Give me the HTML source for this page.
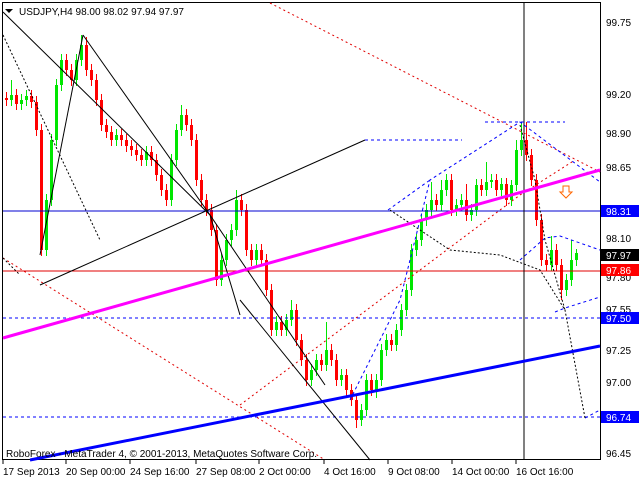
<!DOCTYPE html><html><head><meta charset="utf-8"><style>
body{margin:0;background:#fff;width:640px;height:480px;overflow:hidden;font-family:"Liberation Sans",sans-serif}
svg{display:block}
text{font-family:"Liberation Sans",sans-serif;font-size:10px}
</style></head><body>
<svg width="640" height="480" xmlns="http://www.w3.org/2000/svg">
<rect x="0" y="0" width="640" height="480" fill="#fff"/>
<rect x="2.5" y="2.5" width="598" height="457" fill="none" stroke="#000"/>
<path fill="#ff0000" d="M5 98h3V100h-3zM15 95h3V104h-3zM30 96h3V102h-3zM35 102h3V130h-3zM40 130h3V250h-3zM65 60h3V70h-3zM70 70h3V80h-3zM85 45h3V70h-3zM90 70h3V80h-3zM95 80h3V100h-3zM100 100h3V125h-3zM105 125h3V132h-3zM110 132h3V140h-3zM120 135h3V140h-3zM125 140h3V146h-3zM130 146h3V150h-3zM135 150h3V155h-3zM140 155h3V160h-3zM150 152h3V160h-3zM155 160h3V175h-3zM160 175h3V190h-3zM165 190h3V200h-3zM185 115h3V125h-3zM190 125h3V140h-3zM195 140h3V180h-3zM200 180h3V200h-3zM205 200h3V210h-3zM210 210h3V230h-3zM215 230h3V280h-3zM240 200h3V210h-3zM245 210h3V250h-3zM250 250h3V260h-3zM260 250h3V260h-3zM265 260h3V290h-3zM270 290h3V330h-3zM280 322h3V330h-3zM295 310h3V340h-3zM300 340h3V360h-3zM305 360h3V380h-3zM320 360h3V365h-3zM330 350h3V360h-3zM335 360h3V380h-3zM345 375h3V390h-3zM350 390h3V400h-3zM355 400h3V420h-3zM370 380h3V390h-3zM390 340h3V345h-3zM435 200h3V205h-3zM450 180h3V210h-3zM465 200h3V215h-3zM480 185h3V190h-3zM495 180h3V190h-3zM505 184h3V200h-3zM525 140h3V155h-3zM530 155h3V180h-3zM535 180h3V220h-3zM540 220h3V260h-3zM545 260h3V265h-3zM555 250h3V265h-3zM560 265h3V290h-3z"/>
<path stroke="#ff0000" fill="none" d="M6.5 92V106M16.5 89V110M31.5 90V108M36.5 96V136M41.5 124V256M66.5 54V76M71.5 64V86M86.5 37V76M91.5 64V86M96.5 74V106M101.5 94V131M106.5 119V138M111.5 126V146M121.5 129V146M126.5 134V152M131.5 140V156M136.5 144V161M141.5 149V166M151.5 146V166M156.5 154V181M161.5 169V196M166.5 184V206M186.5 109V131M191.5 119V146M196.5 134V186M201.5 174V206M206.5 194V216M211.5 204V236M216.5 224V286M241.5 194V216M246.5 204V256M251.5 244V266M261.5 244V266M266.5 254V296M271.5 284V336M281.5 316V336M296.5 304V346M301.5 334V366M306.5 354V386M321.5 354V371M331.5 344V366M336.5 354V386M346.5 369V396M351.5 384V406M356.5 394V428M371.5 374V396M391.5 334V351M436.5 194V211M451.5 174V216M466.5 184V221M481.5 179V196M496.5 174V196M506.5 178V206M526.5 122V161M531.5 149V186M536.5 174V226M541.5 214V266M546.5 254V271M556.5 244V271M561.5 259V300"/>
<path fill="#00e600" d="M10 95h3V100h-3zM20 100h3V104h-3zM25 96h3V100h-3zM45 200h3V250h-3zM50 140h3V200h-3zM55 85h3V140h-3zM60 60h3V85h-3zM75 60h3V80h-3zM80 45h3V60h-3zM115 135h3V140h-3zM145 152h3V160h-3zM170 160h3V200h-3zM175 130h3V160h-3zM180 115h3V130h-3zM220 260h3V280h-3zM225 240h3V260h-3zM230 230h3V240h-3zM235 200h3V230h-3zM255 250h3V260h-3zM275 322h3V330h-3zM285 320h3V330h-3zM290 310h3V320h-3zM310 370h3V380h-3zM315 360h3V370h-3zM325 350h3V365h-3zM340 375h3V380h-3zM360 410h3V420h-3zM365 380h3V410h-3zM375 380h3V390h-3zM380 350h3V380h-3zM385 340h3V350h-3zM395 330h3V345h-3zM400 310h3V330h-3zM405 290h3V310h-3zM410 250h3V290h-3zM415 240h3V250h-3zM420 220h3V240h-3zM425 210h3V220h-3zM430 200h3V210h-3zM440 190h3V205h-3zM445 180h3V190h-3zM455 205h3V210h-3zM460 200h3V205h-3zM470 210h3V215h-3zM475 185h3V210h-3zM485 182h3V190h-3zM490 180h3V182h-3zM500 184h3V190h-3zM510 185h3V200h-3zM515 150h3V185h-3zM520 140h3V150h-3zM550 250h3V265h-3zM565 280h3V290h-3zM570 260h3V280h-3zM575 253h3V260h-3z"/>
<path stroke="#00e600" fill="none" d="M11.5 80V106M21.5 94V110M26.5 90V106M46.5 194V256M51.5 134V206M56.5 79V146M61.5 54V91M76.5 54V86M81.5 35V66M116.5 129V146M146.5 146V166M171.5 154V206M176.5 124V166M181.5 105V136M221.5 254V286M226.5 234V266M231.5 224V246M236.5 190V236M256.5 244V266M276.5 316V336M286.5 314V336M291.5 300V326M311.5 364V386M316.5 354V376M326.5 322V371M341.5 369V386M361.5 404V426M366.5 374V416M376.5 374V398M381.5 344V386M386.5 334V356M396.5 324V351M401.5 304V336M406.5 284V316M411.5 244V296M416.5 234V256M421.5 214V246M426.5 204V226M431.5 182V216M441.5 180V211M446.5 174V196M456.5 199V216M461.5 194V211M471.5 204V221M476.5 179V216M486.5 162V196M491.5 174V188M501.5 178V196M511.5 180V206M516.5 140V191M521.5 122V156M551.5 236V271M566.5 274V296M571.5 240V286M576.5 249V266"/>
<line x1="3" y1="211" x2="600" y2="211" stroke="#0000d0"/>
<line x1="3" y1="271" x2="600" y2="271" stroke="#e00000"/>
<line x1="3" y1="318" x2="600" y2="318" stroke="#0000ff" stroke-dasharray="3,3"/>
<line x1="3" y1="417" x2="600" y2="417" stroke="#0000ff" stroke-dasharray="3,3"/>
<line x1="524" y1="3" x2="524" y2="460" stroke="#000"/>
<g fill="none" stroke="#e00000" stroke-dasharray="2,3">
<polyline points="270,3 600,172"/><polyline points="3,258 325,460"/><polyline points="240,405 520,195 575,160"/>
</g>
<g fill="none" stroke="#0000ff" stroke-dasharray="3,3">
<polyline points="365,140 462,140"/><polyline points="485,122 565,122"/>
<polyline points="350,400 400,300 430,180 520,122 600,182"/>
<polyline points="388,210 430,180"/>
<polyline points="520,260 545,238 560,236 600,250"/>
<polyline points="555,312 565,308 600,297"/>
<polyline points="585,418 600,410"/>
</g>
<g fill="none" stroke="#000" stroke-dasharray="2,2">
<polyline points="3,35 100,240"/><polyline points="3,258 20,275"/>
<polyline points="390,210 450,250 500,255 540,270 565,310 585,418"/>
<polyline points="520,125 535,180 545,240 565,310"/>
</g>
<g fill="none" stroke="#000">
<polyline points="3,12 210,215 325,385"/>
<polyline points="83,35 210,215 240,315"/>
<polyline points="40,255 83,35"/>
<polyline points="40,285 365,140"/>
<polyline points="240,300 370,460"/>
</g>
<line x1="3" y1="338" x2="600" y2="170" stroke="#ff00ff" stroke-width="3"/>
<line x1="30" y1="460" x2="600" y2="346" stroke="#0000ff" stroke-width="3"/>
<path d="M563 186h6v6h3l-6 6l-6-6h3z" fill="#fff" stroke="#ff6600"/>
<polygon points="5,9 13,9 9,13" fill="#000"/>
<text x="19" y="15" font-size="11">USDJPY,H4  98.00 98.02 97.94 97.97</text>
<text x="6" y="457">RoboForex - MetaTrader 4, © 2001-2013, MetaQuotes Software Corp.</text>
<g fill="#000">
<text x="606" y="26">99.75</text><text x="606" y="98">99.20</text><text x="606" y="137">98.90</text>
<text x="606" y="171">98.65</text><text x="606" y="242">98.10</text><text x="606" y="281">97.80</text>
<text x="606" y="313">97.55</text><text x="606" y="354">97.25</text><text x="606" y="386">97.00</text>
<text x="606" y="457">96.45</text>
</g>
<rect x="601" y="205" width="38" height="12" fill="#0000ff"/><text x="606" y="215" fill="#fff">98.31</text>
<rect x="601" y="249" width="38" height="12" fill="#000"/><text x="606" y="259" fill="#fff">97.97</text>
<rect x="601" y="264" width="38" height="12" fill="#ff0000"/><text x="606" y="274" fill="#fff">97.86</text>
<rect x="601" y="312" width="38" height="12" fill="#0000ff"/><text x="606" y="322" fill="#fff">97.50</text>
<rect x="601" y="411" width="38" height="12" fill="#0000ff"/><text x="606" y="421" fill="#fff">96.74</text>
<g stroke="#000"><line x1="3" y1="460" x2="3" y2="464"/><line x1="66" y1="460" x2="66" y2="464"/><line x1="130" y1="460" x2="130" y2="464"/><line x1="196" y1="460" x2="196" y2="464"/><line x1="259" y1="460" x2="259" y2="464"/><line x1="324" y1="460" x2="324" y2="464"/><line x1="388" y1="460" x2="388" y2="464"/><line x1="452" y1="460" x2="452" y2="464"/><line x1="516" y1="460" x2="516" y2="464"/></g>
<text x="3" y="475">17 Sep 2013</text><text x="66" y="475">20 Sep 00:00</text><text x="130" y="475">24 Sep 16:00</text>
<text x="196" y="475">27 Sep 08:00</text><text x="259" y="475">2 Oct 00:00</text><text x="324" y="475">4 Oct 16:00</text>
<text x="388" y="475">9 Oct 08:00</text><text x="452" y="475">14 Oct 00:00</text><text x="516" y="475">16 Oct 16:00</text>
</svg>
</body></html>
